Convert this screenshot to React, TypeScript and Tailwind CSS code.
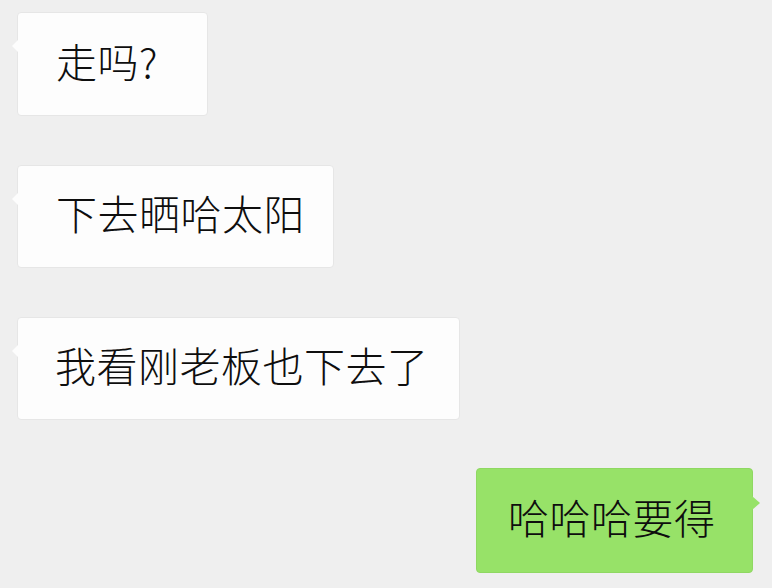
type Msg = { text: string; mine?: boolean; width: string; height: string; pad: string }

const MESSAGES: Msg[] = [
  { text: '走吗?', width: 'w-[191px]', height: 'h-[104px]', pad: 'pl-[38px]' },
  { text: '下去晒哈太阳', width: 'w-[317px]', height: 'h-[103px]', pad: 'pl-[38px]' },
  { text: '我看刚老板也下去了', width: 'w-[443px]', height: 'h-[103px]', pad: 'pl-[37px]' },
  { text: '哈哈哈要得', mine: true, width: 'w-[277px]', height: 'h-[105px]', pad: 'pl-[31px]' },
]

function Bubble({ msg }: { msg: Msg }) {
  const bg = msg.mine ? 'bg-[#97e268] border-[#8fd862]' : 'bg-[#fdfdfd] border-[#e6e6e6]'
  return (
    <div className={`relative flex items-center pb-[8px] rounded-[4px] border ${bg} ${msg.width} ${msg.height} ${msg.pad}`}>
      {/* tail */}
      {msg.mine ? (
        <div className="absolute -right-[8px] top-[27px] w-0 h-0 border-y-[7px] border-y-transparent border-l-[8px] border-l-[#97e268]" />
      ) : (
        <div className="absolute -left-[6px] top-[27px] w-0 h-0 border-y-[6px] border-y-transparent border-r-[6px] border-r-[#fdfdfd]" />
      )}
      <span className="text-[41px] leading-none font-light text-[#0e0e0e] whitespace-nowrap tracking-[0.5px]">{msg.text}</span>
    </div>
  )
}

export default function App() {
  return (
    <div
      className="w-[772px] h-[588px] bg-[#efefef] overflow-hidden"
      style={{ fontFamily: '"Noto Sans CJK SC", "Noto Sans", sans-serif' }}
    >
      <div className="flex flex-col gap-[49px] pt-[12px] pl-[17px] pr-[19px]">
        {MESSAGES.map((m, i) => (
          <div key={i} className={`flex ${m.mine ? 'justify-end -mt-[1px]' : 'justify-start'}`}>
            <Bubble msg={m} />
          </div>
        ))}
      </div>
    </div>
  )
}
